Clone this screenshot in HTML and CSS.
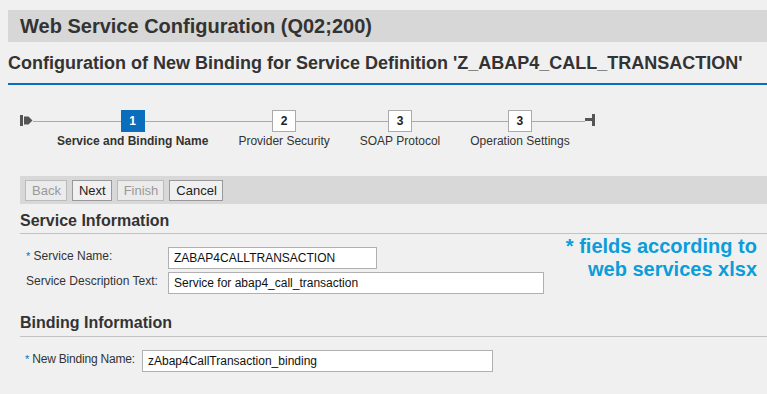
FILE: index.html
```html
<!DOCTYPE html>
<html>
<head>
  <meta charset="UTF-8">
  <title>Web Service Configuration</title>
<link rel="stylesheet" href="styles.css">
</head>
<body>
  <div class="page">
    <div class="title-bar">Web Service Configuration (Q02;200)</div>
    <h1 class="subtitle">Configuration of New Binding for Service Definition 'Z_ABAP4_CALL_TRANSACTION'</h1>

    <!-- roadmap -->
    <div class="stepper">
      <svg class="road-icon" width="13" height="11" viewBox="0 0 13 11">
        <rect x="0" y="0" width="3" height="11" fill="#555"/>
        <polygon points="4,1.5 8.5,1.5 12.5,5.5 8.5,9.5 4,9.5" fill="#555"/>
      </svg>
      <div class="steps">
        <div class="step active">
          <span class="step-box">1</span>
          <span class="step-label">Service and Binding Name</span>
        </div>
        <div class="step">
          <span class="step-box">2</span>
          <span class="step-label">Provider Security</span>
        </div>
        <div class="step">
          <span class="step-box">3</span>
          <span class="step-label">SOAP Protocol</span>
        </div>
        <div class="step">
          <span class="step-box">3</span>
          <span class="step-label">Operation Settings</span>
        </div>
      </div>
      <svg class="road-icon end" width="11" height="12" viewBox="0 0 11 12">
        <rect x="0" y="4" width="8" height="3" fill="#555"/>
        <rect x="7" y="0" width="3" height="12" fill="#555"/>
      </svg>
    </div>

    <div class="toolbar">
      <button class="btn" disabled>Back</button>
      <button class="btn">Next</button>
      <button class="btn" disabled>Finish</button>
      <button class="btn">Cancel</button>
    </div>

    <div class="section">
      <h2 class="section-title">Service Information</h2>
      <div class="form-row first">
        <label class="field-label"><span class="req">*</span> Service Name:</label>
        <input class="field short" type="text" value="ZABAP4CALLTRANSACTION">
      </div>
      <div class="form-row">
        <label class="field-label">Service Description Text:</label>
        <input class="field long" type="text" value="Service for abap4_call_transaction">
      </div>
    </div>

    <div class="section binding">
      <h2 class="section-title">Binding Information</h2>
      <div class="form-row first">
        <label class="field-label"><span class="req">*</span> New Binding Name:</label>
        <input class="field mid" type="text" value="zAbap4CallTransaction_binding">
      </div>
    </div>

    <div class="note">* fields according to<br>web services xlsx</div>
  </div>
</body>
</html>
```

FILE: styles.css
```css
body, html {
  margin: 0;
  padding: 0;
  background: #f0f0f0;
  font-family: "Liberation Sans", Arial, sans-serif;
  color: #333;
}
.page {
  position: relative;
  padding: 10px 0 40px 8px;
}
.title-bar {
  height: 32px;
  line-height: 32px;
  background: #d7d7d7;
  padding-left: 12px;
  font-size: 20px;
  font-weight: bold;
}
.subtitle {
  margin: 11px 0 0 0;
  padding-bottom: 10px;
  border-bottom: 2px solid #0a6ebd;
  font-size: 18px;
  line-height: 20px;
  font-weight: bold;
  white-space: nowrap;
}

/* roadmap */
.stepper {
  display: flex;
  align-items: flex-start;
  margin: 25px 0 0 12px;
  width: 576px;
  background: linear-gradient(#aaa, #aaa) no-repeat;
  background-position: 13px 11px;
  background-size: 552px 1px;
}
.road-icon {
  margin-top: 5px;
  flex: none;
}
.road-icon.end {
  margin-top: 4px;
  margin-left: 15px;
}
.steps {
  display: flex;
  gap: 30px;
  margin-left: 24px;
}
.step {
  display: flex;
  flex-direction: column;
  align-items: center;
}
.step-box {
  box-sizing: border-box;
  width: 24px;
  height: 22px;
  line-height: 20px;
  text-align: center;
  background: #fff;
  border: 1px solid #aaa;
  font-size: 12px;
  font-weight: bold;
  color: #222;
}
.step.active .step-box {
  background: #0a6ebd;
  border-color: #0a6ebd;
  color: #fff;
}
.step-label {
  margin-top: 2px;
  font-size: 12px;
  line-height: 15px;
  white-space: nowrap;
  color: #333;
}
.step.active .step-label {
  font-weight: bold;
}

/* toolbar */
.toolbar {
  display: flex;
  align-items: center;
  gap: 5px;
  height: 28px;
  margin: 27px 0 0 12px;
  padding: 0 5px;
  background: #d8d8d8;
}
.btn {
  height: 21px;
  padding: 0 5px 0 6px;
  margin: 1px 0 0 0;
  font-family: "Liberation Sans", Arial, sans-serif;
  font-size: 13px;
  color: #222;
  background: #f0f0f0;
  border: 1px solid #999;
  border-radius: 0;
}
.btn:disabled {
  color: #999;
  border-color: #bbb;
  background: #ebebeb;
}

/* sections */
.section {
  margin: 7px 0 0 12px;
}
.section.binding {
  margin-top: 19px;
}
.section-title {
  margin: 0;
  padding-bottom: 2px;
  border-bottom: 1px solid #c2c2c2;
  font-size: 16px;
  line-height: 20px;
  font-weight: bold;
}
.binding .section-title {
  padding-bottom: 3px;
}
.form-row {
  display: flex;
  align-items: flex-start;
  margin-top: 3px;
}
.form-row.first {
  margin-top: 13px;
}
.field-label {
  box-sizing: border-box;
  width: 148px;
  padding: 2px 0 0 6px;
  font-size: 12px;
  line-height: 15px;
  color: #333;
}
.binding .field-label {
  width: 122px;
  padding-left: 5px;
  letter-spacing: -0.2px;
}
.req {
  color: #0a6ebd;
  font-size: 11px;
}
.field {
  box-sizing: border-box;
  height: 22px;
  padding: 0 5px;
  border: 1px solid #b0b0b0;
  background: #fff;
  font-family: "Liberation Sans", Arial, sans-serif;
  font-size: 12px;
  color: #111;
}
.field.short { width: 209px; }
.field.long { width: 376px; }
.field.mid { width: 351px; }

/* callout */
.note {
  position: absolute;
  top: 235px;
  right: 10px;
  text-align: right;
  font-size: 20px;
  line-height: 23px;
  font-weight: bold;
  color: #0a9dd9;
}
```
